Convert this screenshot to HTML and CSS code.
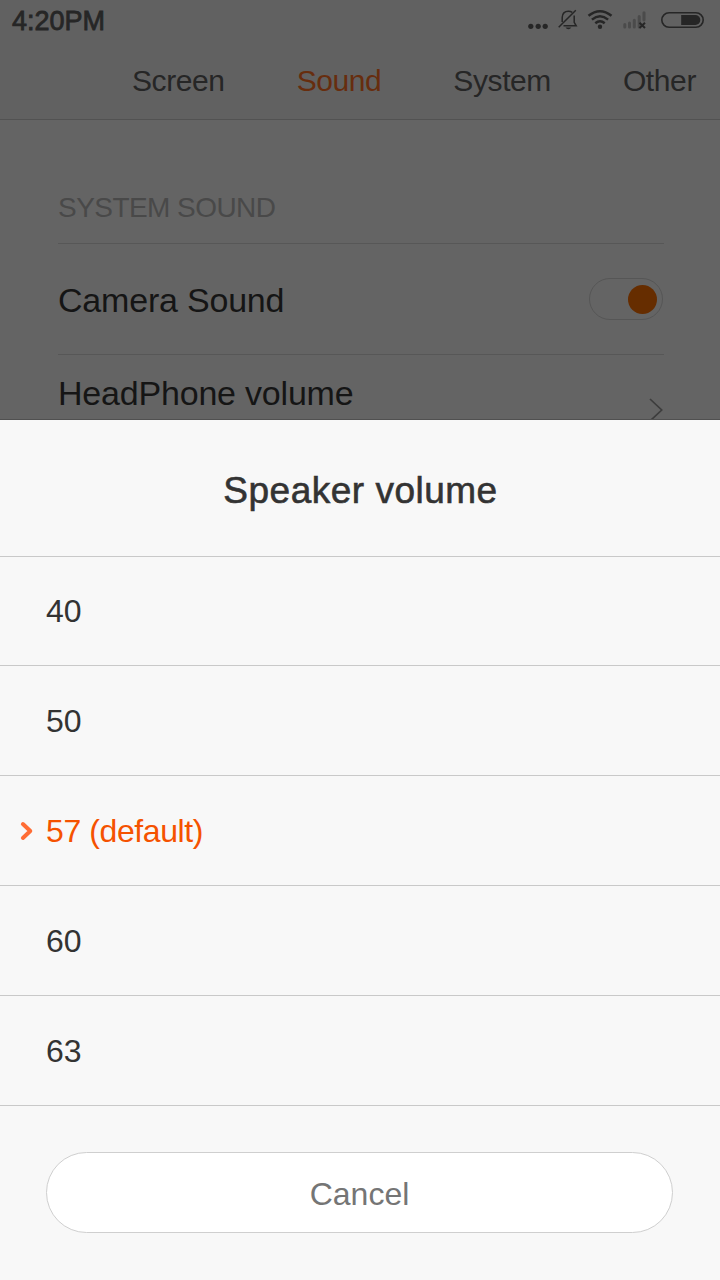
FILE: index.html
```html
<!DOCTYPE html>
<html lang="en">
<head>
<meta charset="utf-8">
<title>Sound settings</title>
<link rel="stylesheet" href="styles.css">
</head>
<body>
<div class="phone">
  <div class="backdrop">
    <header class="top">
      <div class="status">
        <span class="clock">4:20PM</span>
        <svg class="status-icons" width="192" height="40" viewBox="528 0 192 40" fill="none" stroke="#262626">
          <g fill="#262626" stroke="none">
            <circle cx="530.8" cy="26.3" r="2.6"/><circle cx="538.2" cy="26.3" r="2.6"/><circle cx="545.2" cy="26.3" r="2.6"/>
          </g>
          <path stroke-width="1.5" d="M562.2 22V17.5C562.2 13.6 564.6 11.2 568.3 11.2C570 11.2 571.3 11.7 572.2 12.4M574.2 15.5V22.3L576.2 25.8H563.5M558.7 27.3L575.8 10.3"/>
          <path fill="#262626" stroke="none" d="M565.5 27.4h5.8q-1 1.8-2.9 1.8t-2.9-1.8z"/>
          <path stroke-width="2.5" d="M588.5 15.8Q600 6.7 611.5 15.8M591.9 19.6Q600 13 608.1 19.6M595.3 23.3Q600 19.3 604.7 23.3"/>
          <circle cx="600" cy="26.8" r="2.2" fill="#262626" stroke="none"/>
          <path stroke="#4b4b4b" stroke-width="3" stroke-linecap="round" d="M624.8 24.5V27M629.5 23V27M634.3 20.3V27M639.2 16.5V27M644 12.7V20"/>
          <path stroke-width="2" d="M639.5 22.7L645 28M645 22.7L639.5 28"/>
          <rect x="661.8" y="12.7" width="41.4" height="14.6" rx="7.3" stroke-width="1.6"/>
          <path fill="#262626" stroke="none" d="M681.2 15H695.3a4.9 4.9 0 0 1 0 10H681.2z"/>
        </svg>
      </div>
      <nav class="tabs">
        <span class="tab screen">Screen</span>
        <span class="tab sound">Sound</span>
        <span class="tab system">System</span>
        <span class="tab other">Other</span>
      </nav>
    </header>
    <main class="settings">
      <h2 class="section"><span>SYSTEM SOUND</span></h2>
      <div class="setting">
        <span class="label camera">Camera Sound</span>
        <span class="switch"><span class="knob"></span></span>
      </div>
      <div class="setting volume">
        <span class="label">HeadPhone volume</span>
        <svg class="arrow" width="15" height="24" viewBox="0 0 15 24" fill="none" stroke="#3d3d3d" stroke-width="1.7"><path d="M1 1L12.7 12L1 23"/></svg>
      </div>
    </main>
  </div>
  <section class="sheet">
    <h1 class="title"><span>Speaker volume</span></h1>
    <ul class="options">
      <li class="option">40</li>
      <li class="option">50</li>
      <li class="option selected">
        <svg class="marker" width="14" height="20" viewBox="0 0 14 20" fill="none" stroke="#ff6d35" stroke-width="4"><path stroke-linecap="round" stroke-linejoin="round" d="M2.9 3L10.3 10L2.9 17"/></svg>
        <span class="chosen">57 (default)</span>
      </li>
      <li class="option">60</li>
      <li class="option">63</li>
    </ul>
    <button class="cancel" type="button"><span>Cancel</span></button>
  </section>
</div>
</body>
</html>
```
FILE: styles.css
```css
* { box-sizing: border-box; }
body { margin: 0; font-family: "Liberation Sans", Arial, sans-serif; }
h1, h2, ul { margin: 0; padding: 0; font-weight: 400; }
.phone { width: 720px; height: 1280px; overflow: hidden; background: #f8f8f8; }
.backdrop { height: 420px; overflow: hidden; background: #646464; border-bottom: 1px solid #505050; }
.top { height: 120px; background: #616161; border-bottom: 1px solid #525252; }
.status { height: 42px; padding-left: 12px; display: flex; justify-content: space-between; }
.clock { font-size: 27px; line-height: 42px; color: #262626; -webkit-text-stroke: 0.8px #262626; }
.status-icons { display: block; }
.tabs { height: 77px; padding: 0 24px 0 132px; display: flex; justify-content: space-between; font-size: 30px; line-height: 77px; letter-spacing: -0.4px; color: #262626; }
.sound { color: #672d0e; }
.settings { padding: 60px 56px 0 58px; }
.section { height: 64px; border-bottom: 1px solid #575757; font-size: 28px; line-height: 55px; color: #494949; letter-spacing: -0.55px; }
.setting { height: 111px; display: flex; justify-content: space-between; align-items: flex-start; border-bottom: 1px solid #575757; }
.label { font-size: 34px; line-height: 112px; letter-spacing: -0.2px; color: #151515; }
.switch { width: 74px; height: 42px; margin: 34px 1px 0 0; padding: 6px 5px; border: 1px solid #565656; border-radius: 21px; display: flex; justify-content: flex-end; }
.knob { width: 29px; height: 29px; border-radius: 50%; background: #662d00; }
.volume .label { line-height: 76px; }
.arrow { margin: 43px 0 0; }
.sheet { height: 860px; background: #f8f8f8; color: #333; }
.title { height: 137px; padding-left: 1px; border-bottom: 1px solid #c9c9c9; text-align: center; font-size: 37px; line-height: 141px; letter-spacing: 0.5px; -webkit-text-stroke: 0.6px #333; }
.options { list-style: none; }
.option { height: 110px; padding: 37px 0 0 46px; border-bottom: 1px solid #c9c9c9; display: flex; align-items: flex-start; font-size: 32px; line-height: 37px; }
.option:first-child { height: 109px; padding-top: 36px; }
.selected { padding-left: 20px; color: #f55200; }
.marker { margin: 8px 12px 0 0; }
.chosen { letter-spacing: -0.4px; }
.cancel { display: block; width: 627px; height: 81px; margin: 46px 0 0 46px; padding: 4px 0 0; border: 1px solid #cfcfcf; border-radius: 41px; background: #fff; color: #757575; font: 32px "Liberation Sans", Arial, sans-serif; }
```
